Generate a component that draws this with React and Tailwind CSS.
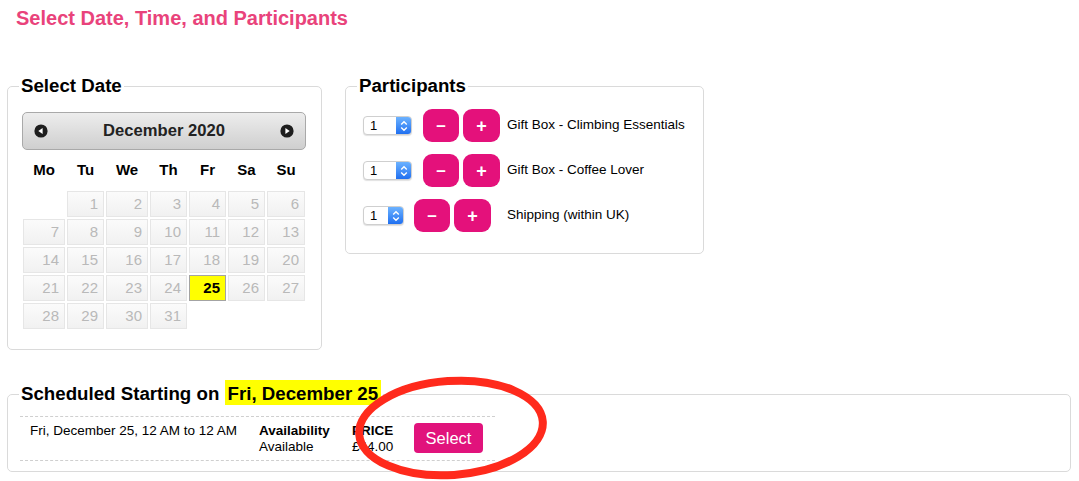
import React from "react";

const cols = "grid grid-cols-[42px_37px_42px_37px_37px_37px_38px] gap-x-[2px]";

function Cell({ n }) {
  if (!n) return <div className="h-[26px]" />;
  if (n === 25)
    return (
      <div className="h-[26px] bg-[#ffff00] border border-[#a3a3a3] text-right pr-[5px] text-[15px] leading-[24px] font-bold text-black">
        25
      </div>
    );
  return (
    <div className="h-[26px] bg-gradient-to-b from-[#fbfbfb] to-[#f1f1f1] border border-[#e6e6e6] text-right pr-[5px] text-[15px] leading-[24px] text-[#b9b9b9]">
      {n}
    </div>
  );
}

function Select({ wide }) {
  return (
    <div
      className={`flex h-[19px] ${wide ? "w-[49px]" : "w-[41px]"} rounded-[4px] border border-[#cfcfcf] bg-white shadow-[0_1px_1px_rgba(0,0,0,0.12)] overflow-hidden`}
    >
      <div className="flex-1 pl-[6px] text-[13px] leading-[17px] text-black">1</div>
      <div className="w-[15px] h-full bg-gradient-to-b from-[#6cb2ff] to-[#1f6ff0] flex items-center justify-center">
        <svg width="8" height="12" viewBox="0 0 8 12">
          <path d="M1.2 4.6 L4 1.8 L6.8 4.6" stroke="white" strokeWidth="1.4" fill="none" />
          <path d="M1.2 7.4 L4 10.2 L6.8 7.4" stroke="white" strokeWidth="1.4" fill="none" />
        </svg>
      </div>
    </div>
  );
}

function PRow({ wide, label }) {
  return (
    <div className="flex items-center h-[33px]">
      <div className="w-[144px] flex items-center">
        <Select wide={wide} />
        <button className={`${wide ? "ml-[11px]" : "ml-[10px]"} w-[36px] h-[33px] rounded-[9px] bg-[#e4117b] text-white font-bold text-[17px] leading-none flex items-center justify-center`}>
          –
        </button>
        <button className="ml-[4px] w-[37px] h-[33px] rounded-[9px] bg-[#e4117b] text-white font-bold text-[18px] leading-none flex items-center justify-center">
          +
        </button>
      </div>
      <div className="text-[13.5px] text-black">{label}</div>
    </div>
  );
}

export default function App() {
  const days = [null];
  for (let d = 1; d <= 31; d++) days.push(d);
  return (
    <div className="relative w-[1079px] h-[481px] bg-white overflow-hidden font-['Liberation_Sans',Arial,sans-serif] text-black">
      <h1 className="pl-[16px] pt-[6px] text-[20px] leading-[24px] font-bold text-[#e9437b]">
        Select Date, Time, and Participants
      </h1>

      <div className="flex items-start gap-[23px] pl-[7px] mt-[42px]">
        <fieldset className="w-[315px] border border-[#dadada] rounded-[5px] pl-[14px] pr-[14px] pt-[12px] pb-[20px]">
          <legend className="ml-[-3px] px-[2px] text-[18.7px] font-bold">Select Date</legend>
          <div className="w-[284px] h-[38px] rounded-[5px] border border-[#a9a9a9] bg-gradient-to-b from-[#ededed] to-[#cfcfcf] flex items-center justify-between px-[11px]">
            <svg width="14" height="14" viewBox="0 0 14 14">
              <circle cx="7" cy="7" r="6.6" fill="#1e1e1e" />
              <path d="M4.3 7 L8.6 4 L8.6 10 Z" fill="white" />
            </svg>
            <span className="text-[16.6px] font-bold text-[#222]">December 2020</span>
            <svg width="14" height="14" viewBox="0 0 14 14">
              <circle cx="7" cy="7" r="6.6" fill="#1e1e1e" />
              <path d="M9.7 7 L5.4 4 L5.4 10 Z" fill="white" />
            </svg>
          </div>
          <div className={`${cols} h-[41px] items-center ml-[1px]`}>
            {["Mo", "Tu", "We", "Th", "Fr", "Sa", "Su"].map((d) => (
              <div key={d} className="text-center text-[15px] font-bold">
                {d}
              </div>
            ))}
          </div>
          <div className={`${cols} gap-y-[2px] ml-[1px]`}>
            {days.map((d, i) => (
              <Cell key={i} n={d} />
            ))}
          </div>
        </fieldset>

        <fieldset className="w-[359px] border border-[#dadada] rounded-[5px] pl-[17px] pr-[10px] pt-[9px] pb-[21px]">
          <legend className="ml-[-6px] px-[2px] text-[18.7px] font-bold">Participants</legend>
          <div className="flex flex-col gap-[12px]">
            <PRow wide label="Gift Box - Climbing Essentials" />
            <PRow wide label="Gift Box - Coffee Lover" />
            <PRow label="Shipping (within UK)" />
          </div>
        </fieldset>
      </div>

      <fieldset className="ml-[7px] mt-[30px] w-[1064px] border border-[#dadada] rounded-[5px] pl-[12px] pt-[8px] pb-[10px]">
        <legend className="ml-[-1px] px-[2px] text-[18.7px] font-bold">
          Scheduled Starting on{" "}
          <span className="bg-[#ffff00] px-[3px] pt-[3px] pb-[1px]">Fri, December 25</span>
        </legend>
        <div className="w-[475px] border-t border-b border-dashed border-[#cfcfcf] flex items-start pt-[6px] pb-[5px] text-[13.5px] leading-[16px]">
          <div className="w-[239px] pl-[10px]">Fri, December 25, 12 AM to 12 AM</div>
          <div className="w-[93px]">
            <div className="font-bold">Availability</div>
            <div>Available</div>
          </div>
          <div className="w-[62px]">
            <div className="font-bold">PRICE</div>
            <div>£44.00</div>
          </div>
          <button className="w-[69px] h-[30px] rounded-[4px] bg-[#e1137c] text-white text-[16.5px] leading-none">
            Select
          </button>
        </div>
      </fieldset>

      <svg className="absolute inset-0 pointer-events-none" width="1079" height="481">
        <ellipse
          cx="451"
          cy="428"
          rx="92"
          ry="47"
          fill="none"
          stroke="#ff2a1c"
          strokeWidth="8"
          transform="rotate(-4 451 428)"
        />
      </svg>
    </div>
  );
}
